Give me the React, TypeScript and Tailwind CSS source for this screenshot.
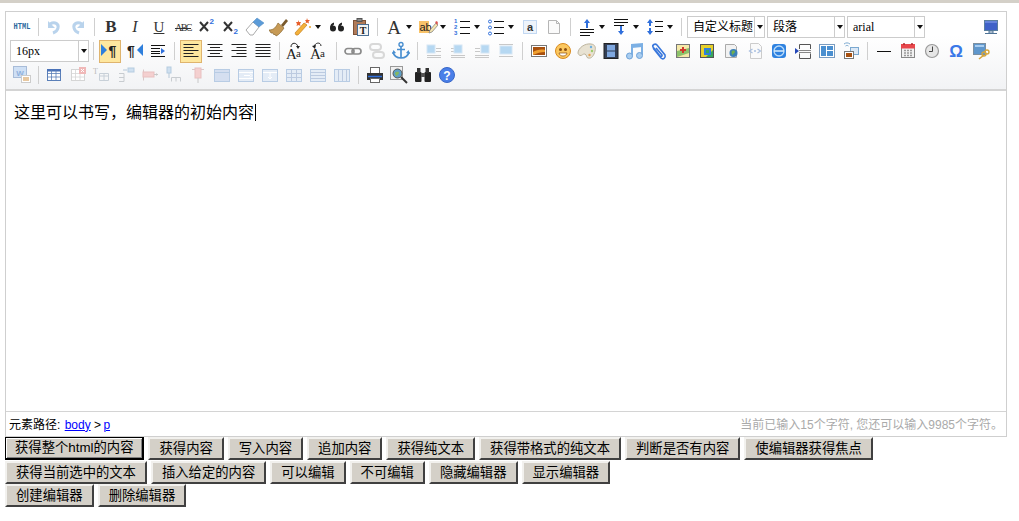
import type { ReactNode } from "react";

const SERIF = { fontFamily: '"Liberation Serif", serif' };

function S({ children }: { children: ReactNode }) {
  return (
    <svg width="20" height="20" viewBox="0 0 20 20" fill="none">
      {children}
    </svg>
  );
}

function Cell({ children, active }: { children?: ReactNode; active?: boolean }) {
  return (
    <div className="flex h-6 w-6 shrink-0 items-center justify-center">
      {active ? (
        <div className="flex h-[23px] w-[22px] items-center justify-center border border-[#dfb46e] bg-[#fee79f]">
          {children}
        </div>
      ) : (
        children
      )}
    </div>
  );
}

function Caret() {
  return (
    <svg width="6" height="4" viewBox="0 0 6 4">
      <path d="M0 0h6L3 4z" fill="#111" />
    </svg>
  );
}

function Split({ children }: { children: ReactNode }) {
  return (
    <div className="flex h-6 w-[34px] shrink-0 items-center">
      <div className="flex h-6 w-6 items-center justify-center">{children}</div>
      <Caret />
    </div>
  );
}

function Sep({ narrow }: { narrow?: boolean }) {
  return (
    <div className={`flex h-6 shrink-0 items-center justify-center ${narrow ? "w-2" : "w-[9px]"}`}>
      <div className="h-[18px] w-px bg-[#cfcfcf]" />
    </div>
  );
}

function Select({ label, serif, wide }: { label: string; serif?: boolean; wide?: boolean }) {
  return (
    <div className={`flex h-[22px] shrink-0 items-stretch border border-[#cccccc] bg-white text-xs text-black ${wide ? "w-[79px]" : "w-[78px]"}`}>
      <div className="flex-1 truncate pl-[5px] leading-[20px]" style={serif ? SERIF : undefined}>
        {label}
      </div>
      <div className="flex w-[10px] items-center justify-center border-l border-[#cccccc]">
        <Caret />
      </div>
    </div>
  );
}

const Lines = ({ x = 4, w = 12, ys, c = "#222" }: { x?: number; w?: number; ys: number[]; c?: string }) => (
  <>
    {ys.map((y) => (
      <path key={y} d={`M${x} ${y + 0.5}h${w}`} stroke={c} />
    ))}
  </>
);

/* row 1 */
const Undo = ({ flip }: { flip?: boolean }) => (
  <S>
    <g transform={flip ? "matrix(-1 0 0 1 20 0)" : undefined}>
      <path d="M6 7c5-3 9 0 8 4-.5 2.500-2 4-5 5" stroke="#b9d3ec" strokeWidth="3" />
      <path d="M4 4v7h7z" fill="#b9d3ec" />
    </g>
  </S>
);
const Sup = ({ down }: { down?: boolean }) => (
  <S>
    <path d="M3 5l8 9M11 5l-8 9" stroke="#333" strokeWidth="2" />
    <text x="12.500" y={down ? 17 : 7} fontSize="8" fontWeight="700" fill="#2f6fdc" fontFamily="Liberation Sans">
      2
    </text>
  </S>
);
const Eraser = () => (
  <S>
    <path d="M1 13l7-8 6 5-6 8H5z" fill="#fff" stroke="#aaa" />
    <path d="M8 5l4-4 7 5-5 4z" fill="#5b9bd8" stroke="#4a86c0" strokeWidth=".5" />
  </S>
);
const Brush = () => (
  <S>
    <path d="M12 8l5-6 2 2-5 6z" fill="#7a5a2c" />
    <path d="M0 13c5 0 7-3 9-7l6 5c-2 3-5 7-8 8l-1-2-1 1-1-2-2 0z" fill="#c79a55" stroke="#8a6830" strokeWidth=".7" />
  </S>
);
const Wand = () => (
  <S>
    <path d="M3 18l-1-2 9-10 3 2-9 10z" fill="#f3b13b" stroke="#c47f1c" strokeWidth=".7" />
    <path d="M5 3l1 2 2 0-1 2 .5 2-2-1-2 1 .5-2-1-2h2zM14 1l.7 2H17l-1.500 1.500.5 2-2-1-1.500 1 .5-2L12 3h1.500z" fill="#e8602c" />
    <circle cx="17" cy="10" r="1" fill="#e8a52c" />
  </S>
);
const Quote = () => (
  <S>
    <circle cx="6" cy="11.500" r="3" fill="#222" />
    <path d="M3 11c0-3 1.500-5 4-5.500v2C6 8 5.500 9 5.500 10z" fill="#222" />
    <circle cx="14" cy="11.500" r="3" fill="#222" />
    <path d="M11 11c0-3 1.500-5 4-5.500v2c-1 .5-1.500 1.500-1.500 2.500z" fill="#222" />
  </S>
);
const Paste = () => (
  <S>
    <rect x="2.500" y="3.500" width="12" height="14" fill="#b07a58" stroke="#7d5238" />
    <rect x="6" y="1.500" width="5" height="3" fill="#888" stroke="#555" />
    <rect x="6.500" y="7.500" width="11" height="11" fill="#f4f4f4" stroke="#4a6f95" />
    <text x="12" y="16.500" textAnchor="middle" fontSize="10" fontWeight="700" fill="#222" fontFamily="Liberation Serif">
      T
    </text>
  </S>
);
const Highlight = () => (
  <S>
    <rect x="1" y="4" width="10" height="12" fill="#f8c36a" />
    <text x="1.500" y="14" fontSize="11" fill="#222" fontFamily="Liberation Sans">
      ab
    </text>
    <path d="M11 16l1-3 6-7 2 2-6 7z" fill="#f6e6b0" stroke="#777" strokeWidth=".7" />
    <path d="M17 5l2-1 1 2-1 2z" fill="#d9534f" />
  </S>
);
const ListO = () => (
  <S>
    <text x="2" y="6" fontSize="6" fontWeight="700" fill="#2f6fdc" fontFamily="Liberation Sans">1</text>
    <text x="2" y="12" fontSize="6" fontWeight="700" fill="#2f6fdc" fontFamily="Liberation Sans">2</text>
    <text x="2" y="18" fontSize="6" fontWeight="700" fill="#2f6fdc" fontFamily="Liberation Sans">3</text>
    <Lines x={8} w={10} ys={[4, 10, 16]} c="#111" />
  </S>
);
const ListU = () => (
  <S>
    {[4.500, 10.500, 16.500].map((y) => (
      <circle key={y} cx="4" cy={y} r="1.500" stroke="#2f6fdc" />
    ))}
    <Lines x={8} w={10} ys={[4, 10, 16]} c="#111" />
  </S>
);
const Boxed = () => (
  <S>
    <rect x="3.500" y="3.500" width="13" height="13" fill="#eef4fb" stroke="#8fb6e6" strokeDasharray="1 1" />
    <text x="10" y="14" textAnchor="middle" fontSize="11" fontWeight="700" fill="#333" fontFamily="Liberation Sans">
      a
    </text>
  </S>
);
const Page = () => (
  <S>
    <path d="M4.500 3.500h8l3 3v10h-11z" fill="#fafafa" stroke="#b5b5b5" />
    <path d="M12.500 3.500v3h3" stroke="#b5b5b5" />
  </S>
);
const SpaceTop = () => (
  <S>
    <path d="M10 2l3 4h-2v5H9V6H7z" fill="#2f6fdc" />
    <Lines x={3} w={14} ys={[12, 15]} c="#111" />
    <Lines x={3} w={10} ys={[18]} c="#111" />
  </S>
);
const SpaceBottom = () => (
  <S>
    <Lines x={3} w={14} ys={[2, 5]} c="#111" />
    <Lines x={3} w={10} ys={[8]} c="#111" />
    <path d="M10 18l3-4h-2V9H9v5H7z" fill="#2f6fdc" />
  </S>
);
const LineHeight = () => (
  <S>
    <path d="M5 2l3 4H6v3H4V6H2zM5 18l3-4H6v-3H4v3H2z" fill="#2f6fdc" />
    <Lines x={10} w={8} ys={[4, 9, 14]} c="#111" />
  </S>
);
const Monitor = () => (
  <S>
    <rect x="3.500" y="3.500" width="13" height="10" fill="#3f62c8" stroke="#5a7f9e" />
    <path d="M4 5h12" stroke="#8ea6ee" />
    <path d="M8 14h4v2H8zM4 16.500h12" stroke="#4f7396" />
  </S>
);

/* row 2 */
const Dir = ({ rtl }: { rtl?: boolean }) => (
  <S>
    <path d={rtl ? "M19 3v12l-6-6z" : "M1 3v12l6-6z"} fill="#2f7fdc" />
    <text x={rtl ? 7 : 12.500} y="15" textAnchor="middle" fontSize="14" fontWeight="700" fill="#222" fontFamily="Liberation Sans">
      ¶
    </text>
  </S>
);
const Indent = () => (
  <S>
    <Lines x={3} w={14} ys={[4, 15]} c="#111" />
    <Lines x={3} w={9} ys={[7, 10, 12]} c="#111" />
    <path d="M13 7l4 3-4 3z" fill="#2f6fdc" />
  </S>
);
const Align = ({ kind }: { kind: "l" | "c" | "r" | "j" }) => {
  const ys = [3, 6, 9, 12, 15];
  return (
    <S>
      {ys.map((y, i) => {
        const long = i % 2 === 0 || kind === "j";
        const w = long ? 15 : 10;
        const x = kind === "c" ? 10 - w / 2 : kind === "r" ? 17.500 - w : 2.500;
        return <path key={y} d={`M${x} ${y + 0.5}h${w}`} stroke="#222" />;
      })}
    </S>
  );
};
const Case = ({ up }: { up?: boolean }) => (
  <S>
    <text x="0" y="18" fontSize="15" fill="#222" fontFamily="Liberation Serif">A</text>
    <text x="10" y="16" fontSize="11" fill="#222" fontFamily="Liberation Serif">a</text>
    <path d={up ? "M5 6c0-5 6-5 7 0" : "M4 6c1-5 7-5 7-1"} stroke="#222" />
    <path d={up ? "M10 5h4l-2 3z" : "M2 5l4-1-1 4z"} fill="#222" />
  </S>
);
const Link = ({ off }: { off?: boolean }) => (
  <S>
    {off ? (
      <>
        <rect x="3" y="3" width="11" height="6" rx="3" stroke="#d8d8d8" strokeWidth="2" />
        <rect x="6" y="11" width="11" height="6" rx="3" stroke="#d8d8d8" strokeWidth="2" />
      </>
    ) : (
      <>
        <rect x="2" y="7.500" width="9" height="5.500" rx="2.700" stroke="#8a8a8a" strokeWidth="1.700" />
        <rect x="9" y="7.500" width="9" height="5.500" rx="2.700" stroke="#8a8a8a" strokeWidth="1.700" />
      </>
    )}
  </S>
);
const Anchor = () => (
  <S>
    <circle cx="10" cy="3.500" r="2" stroke="#4a8fd0" strokeWidth="1.400" />
    <path d="M10 5.500V17M6 8.500h8M2 11c1 4 4 6 8 6s7-2 8-6" stroke="#4a8fd0" strokeWidth="1.700" />
    <path d="M1 13l1.500-4L5 12zM19 13l-1.500-4L15 12z" fill="#4a8fd0" />
  </S>
);
const ImgAlign = ({ kind }: { kind: "l" | "r" | "c" | "n" }) => (
  <S>
    {kind === "n" ? (
      <>
        <Lines x={3} w={14} ys={[3, 15]} c="#c8c8c8" />
        <rect x="4" y="5" width="12" height="8" fill="#b6d8f2" stroke="#d5e6f4" />
      </>
    ) : (
      <>
        <Lines x={3} w={14} ys={[14, 16]} c="#c8c8c8" />
        <Lines x={kind === "l" ? 12 : 3} w={5} ys={[7, 10]} c="#c8c8c8" />
        <rect x={kind === "l" ? 3 : kind === "r" ? 9 : 6} y="4" width="8" height="8" fill="#b6d8f2" stroke="#d5e6f4" />
      </>
    )}
  </S>
);
const Picture = () => (
  <S>
    <rect x="2.500" y="4.500" width="15" height="11" fill="#fff" stroke="#777" />
    <rect x="4" y="6" width="12" height="8" fill="#a8500f" />
    <path d="M4 11c3-2 8-3 12-2v2c-4 0-8 1-12 3z" fill="#f0a030" />
  </S>
);
const Smile = () => (
  <S>
    <circle cx="10" cy="10" r="7.500" fill="#fbc75f" stroke="#d98a1e" />
    <circle cx="7.500" cy="8.500" r="1.500" fill="#8a4d10" />
    <circle cx="12.500" cy="8.500" r="1.500" fill="#8a4d10" />
    <path d="M6 12h8c-.5 2-2 3-4 3s-3.500-1-4-3z" fill="#fff" stroke="#8a4d10" strokeWidth=".7" />
  </S>
);
const Palette = () => (
  <S>
    <path d="M1 12C1 7 8 2 14 3c4 .5 5 3 4 7s-3 8-7 7c-2-.5-1-3-3-4-2-.5-3 2-5 1.500C2 14 1 13 1 12z" fill="#e8e2d2" stroke="#bdb59f" />
    <circle cx="14" cy="6" r="1.200" fill="#6cb0e0" />
    <circle cx="15" cy="10" r="1.200" fill="#9ccc6a" />
    <circle cx="12.500" cy="14" r="1.200" fill="#e8a050" />
  </S>
);
const Film = () => (
  <S>
    <rect x="3" y="2.500" width="14" height="15" fill="#333f55" stroke="#222" />
    <rect x="6" y="4" width="8" height="5.500" fill="#7fa8e0" />
    <rect x="6" y="10.500" width="8" height="5.500" fill="#7fa8e0" />
  </S>
);
const Music = () => (
  <S>
    <path d="M7 14V4l10-1v11" stroke="#7cb0e4" strokeWidth="2" />
    <path d="M7 4l10-1v3L7 7z" fill="#7cb0e4" />
    <circle cx="4.500" cy="15" r="3" fill="#a8cdf0" stroke="#6ea2d8" />
    <circle cx="14.500" cy="14.500" r="3" fill="#a8cdf0" stroke="#6ea2d8" />
  </S>
);
const Clip = () => (
  <S>
    <path d="M4 7l8 10c2 2 5 0 4-3L8 4C6 2 3 4 4 6l7 9c1 1 2.500 0 2-1L7 7" stroke="#3a78dc" strokeWidth="1.600" />
  </S>
);
const MapIcon = () => (
  <S>
    <rect x="3.500" y="3.500" width="13" height="13" fill="#f5e9a8" stroke="#777" />
    <path d="M4 10l12-3v5l-12 4z" fill="#8cc26a" />
    <path d="M9 6h2v2h2v2h-2v2H9v-2H7V8h2z" fill="#d0382c" />
  </S>
);
const GMap = () => (
  <S>
    <rect x="3.500" y="3.500" width="13" height="13" fill="#38a85c" stroke="#555" />
    <path d="M4 4h12v5L9 16H4z" fill="#e6d02c" />
    <path d="M7 7h7v7H7z" fill="#2f7fdc" />
    <path d="M9 9h3v3H9z" fill="#38a85c" />
  </S>
);
const Globe = () => (
  <S>
    <path d="M4.500 3.500h9l2 2v11h-11z" fill="#f2f2f2" stroke="#aaa" />
    <circle cx="12.500" cy="12" r="4" fill="#3a7fb8" />
    <path d="M11 10c2-1 3 0 3 1s-2 1-2 3c-1 0-2-3-1-4z" fill="#6fb04c" />
  </S>
);
const CodePage = () => (
  <S>
    <path d="M5.500 2.500h8l3 3v12h-11z" fill="#fafafa" stroke="#ccc" />
    <path d="M7.500 8l-3 2 3 2M12.500 8l3 2-3 2" stroke="#a9bfe0" strokeWidth="1.200" />
    <circle cx="10" cy="10" r="1" fill="#a9bfe0" />
  </S>
);
const Ring = () => (
  <S>
    <rect x="3" y="3" width="14" height="14" rx="3" fill="#2f82e0" />
    <circle cx="10" cy="10" r="5" stroke="#bcdcf8" strokeWidth="1.300" />
    <path d="M5 10h10" stroke="#d8ecfc" strokeWidth="1.500" />
  </S>
);
const PageBreak = () => (
  <S>
    <path d="M6.500 8V3.500h11V8M6.500 12.500v5h11v-5" stroke="#555" />
    <Lines x={6} w={12} ys={[9, 11]} c="#888" />
    <path d="M2 7l4 3-4 3z" fill="#2346b8" />
  </S>
);
const Template = () => (
  <S>
    <rect x="2.500" y="3.500" width="15" height="13" fill="#fff" stroke="#7a9cc0" />
    <rect x="4" y="5" width="5" height="10" fill="#4a8fd0" />
    <rect x="10" y="5" width="6" height="4" fill="#4a8fd0" />
    <rect x="10" y="10" width="6" height="5" fill="#4a8fd0" />
  </S>
);
const Wireless = () => (
  <S>
    <path d="M3 3c2-1.500 4-1.500 6 0M4.500 5c1-.7 2-.7 3 0" stroke="#7aa8d0" />
    <rect x="9.500" y="6.500" width="8" height="7" fill="#dbe8f6" stroke="#7aa8d0" />
    <rect x="3.500" y="10.500" width="9" height="7" fill="#fff" stroke="#777" />
    <rect x="5" y="12" width="6" height="4" fill="#a8500f" />
  </S>
);
const Calendar = () => (
  <S>
    <rect x="3.500" y="3.500" width="13" height="13" fill="#f2f2f2" stroke="#888" />
    <rect x="3" y="3" width="14" height="4.500" fill="#e8474c" />
    <path d="M6 2v2M14 2v2" stroke="#b02a2e" strokeWidth="1.500" />
    <path d="M6 9.500h8M6 12h8M6 14.500h8" stroke="#9a9a9a" strokeWidth="1.300" strokeDasharray="2 1" />
  </S>
);
const Clock = () => (
  <S>
    <circle cx="10" cy="10" r="6.500" fill="#e6e6e6" stroke="#9a9a9a" strokeWidth="1.200" />
    <path d="M10.500 5.500v5H7" stroke="#444" />
  </S>
);
const Snap = () => (
  <S>
    <rect x="3.500" y="2.500" width="12" height="11" fill="#5f97cc" stroke="#7c8fa0" />
    <path d="M5 4h9v2H5z" fill="#a8cdf0" />
    <circle cx="14" cy="13" r="2" stroke="#d6a63c" strokeWidth="1.400" />
    <circle cx="17" cy="11" r="2" stroke="#d6a63c" strokeWidth="1.400" />
    <path d="M9 18l5-4" stroke="#d6a63c" strokeWidth="1.600" />
  </S>
);

/* row 3 */
const Word = () => (
  <S>
    <rect x="1.500" y="1.500" width="13" height="11" fill="#cfe0f5" stroke="#a8bcd8" />
    <text x="8" y="10.500" textAnchor="middle" fontSize="8" fontWeight="700" fill="#8fb0dc" fontFamily="Liberation Sans">
      W
    </text>
    <rect x="9.500" y="10.500" width="9" height="7" fill="#fff" stroke="#ccc" />
    <rect x="11" y="12" width="6" height="4" fill="#e8c8a0" />
  </S>
);
const Grid = ({ c, bg, head }: { c: string; bg: string; head?: string }) => (
  <>
    <rect x="3.500" y="4.500" width="13" height="11" fill={bg} stroke={c} />
    {head && <rect x="3" y="4" width="14" height="2.500" fill={head} />}
    <path d="M7.500 5v10M12 5v10M4 8.500h12M4 12h12" stroke={c} strokeWidth=".8" />
  </>
);
const TableNew = () => (
  <S>
    <Grid c="#5a7fb8" bg="#fff" head="#4a72b8" />
  </S>
);
const TableDel = () => (
  <S>
    <Grid c="#d5d5d5" bg="#fff" />
    <rect x="11" y="2" width="7" height="7" fill="#f0b8b8" />
    <path d="M13 4l3 3M16 4l-3 3" stroke="#fff" />
  </S>
);
const TableT = () => (
  <S>
    <text x="1" y="9" fontSize="8" fill="#bbb" fontFamily="Liberation Serif">T</text>
    <path d="M7.500 8.500h9v7h-9zM7.500 11h9M12 9v6" stroke="#c8d0d8" />
  </S>
);
const InsertCol = () => (
  <S>
    <path d="M3 8.500h5v8H3M3 12.500h5" stroke="#c8ccd0" />
    <rect x="12" y="3" width="6" height="4" fill="#cfe0f0" stroke="#b5cce0" />
    <path d="M11 5H7" stroke="#b5c8d8" />
  </S>
);
const DelCol = () => (
  <S>
    <path d="M3.500 4.500v11" stroke="#d8c8c8" />
    <rect x="3" y="7" width="11" height="5" fill="#f4d0d0" stroke="#e8c0c0" />
    <path d="M14 9.500h4" stroke="#c8c8c8" />
    <path d="M18 9.500l-2-1.500v3z" fill="#c8c8c8" />
  </S>
);
const InsertRow = () => (
  <S>
    <rect x="3" y="2" width="4" height="6" fill="#cfe0f0" stroke="#b5cce0" />
    <path d="M5 8v5" stroke="#b5c8d8" />
    <path d="M7.500 16.500v-4h9v4M12 12.500v4" stroke="#c8ccd0" />
  </S>
);
const DelRow = () => (
  <S>
    <path d="M4 4.500h12" stroke="#d8c8c8" />
    <rect x="7" y="3" width="6" height="10" fill="#f4d0d0" stroke="#e8c0c0" />
    <path d="M10 13v5" stroke="#c8c8c8" />
  </S>
);
const Cells = ({ kind }: { kind: "plain" | "right" | "down" | "grid" | "rows" | "cols" }) => (
  <S>
    <rect x="2.500" y="4.500" width="15" height="12" fill={kind === "plain" ? "#d5dff0" : "#e4ecf6"} stroke="#b8cce4" />
    {kind === "plain" && <path d="M3 7.500h14" stroke="#b8cce4" />}
    {kind === "grid" && <path d="M7.500 5v11M12.500 5v11M3 8.500h14M3 12.500h14" stroke="#bccae0" />}
    {kind === "rows" && <path d="M3 7.500h14M3 10.500h14M3 13.500h14" stroke="#bccae0" />}
    {kind === "cols" && <path d="M6.500 5v11M10.500 5v11M14.500 5v11" stroke="#bccae0" />}
    {kind === "right" && <path d="M3 7.500h14M3 13.500h14M8 10.500h6M14 8.500l2 2-2 2" stroke="#fff" />}
    {kind === "down" && <path d="M3 7.500h14M10 8v6M8 12l2 2 2-2" stroke="#fff" />}
  </S>
);
const Printer = () => (
  <S>
    <rect x="5.500" y="2.500" width="9" height="6" fill="#fff" stroke="#666" />
    <rect x="2" y="8" width="16" height="7" fill="#333" />
    <path d="M3 11.500h14" stroke="#2f6fdc" strokeWidth="1.500" />
    <rect x="5.500" y="13.500" width="9" height="4" fill="#fff" stroke="#666" />
  </S>
);
const Preview = () => (
  <S>
    <rect x="1.500" y="1.500" width="12" height="13" fill="#f0f0f0" stroke="#999" />
    <circle cx="8.500" cy="8.500" r="4.500" fill="#5ea0c8" stroke="#555" />
    <path d="M6 8c2-2 4-1 4 0s-2 2-2 3c-1 0-2-2-2-3z" fill="#86b860" />
    <path d="M12 12l6 6" stroke="#333" strokeWidth="2" />
  </S>
);
const Binoculars = () => (
  <S>
    <rect x="2" y="7" width="6.500" height="10" rx="1" fill="#222" />
    <rect x="11.500" y="7" width="6.500" height="10" rx="1" fill="#222" />
    <rect x="4" y="3" width="3.500" height="5" fill="#333" />
    <rect x="12.500" y="3" width="3.500" height="5" fill="#333" />
    <rect x="8" y="8" width="4" height="4" fill="#555" />
  </S>
);
const Help = () => (
  <S>
    <circle cx="10" cy="10" r="7.500" fill="#4a7fe8" stroke="#3a68c8" />
    <text x="10" y="14.500" textAnchor="middle" fontSize="12" fontWeight="700" fill="#fff" fontFamily="Liberation Sans">
      ?
    </text>
  </S>
);

const buttonRows = [
  ["获得整个html的内容", "获得内容", "写入内容", "追加内容", "获得纯文本", "获得带格式的纯文本", "判断是否有内容", "使编辑器获得焦点"],
  ["获得当前选中的文本", "插入给定的内容", "可以编辑", "不可编辑", "隐藏编辑器", "显示编辑器"],
  ["创建编辑器", "删除编辑器"],
];

export default function App() {
  return (
    <div className="h-[521px] w-[1019px] overflow-hidden bg-white font-['Liberation_Sans','Noto_Sans_CJK_SC',sans-serif] text-black">
      <div className="h-[3px] bg-[#d4d0c8]" />

      <div className="mt-2 ml-[5px] flex h-[426px] w-[1002px] flex-col border border-[#cfcfcf]">
        {/* toolbar */}
        <div className="h-[79px] border-b-2 border-[#d4d4d4] bg-gradient-to-b from-white from-30% to-[#f2f3f5] py-[3px] pl-1">
          <div className="flex h-6 items-center">
            <Cell>
              <span className="scale-y-125 font-['Liberation_Mono',monospace] text-[7px] font-bold text-[#2a6a9e]">HTML</span>
            </Cell>
            <Sep narrow />
            <Cell><Undo /></Cell>
            <Cell><Undo flip /></Cell>
            <Sep />
            <Cell><span className="text-[17px] font-bold text-[#333]" style={SERIF}>B</span></Cell>
            <Cell><span className="text-[16px] text-[#333] italic" style={SERIF}>I</span></Cell>
            <Cell><span className="text-[15px] text-[#333] underline" style={SERIF}>U</span></Cell>
            <Cell><span className="text-[10px] tracking-[-1.5px] text-[#333] line-through" style={SERIF}>ABC</span></Cell>
            <Cell><Sup /></Cell>
            <Cell><Sup down /></Cell>
            <Cell><Eraser /></Cell>
            <Cell><Brush /></Cell>
            <Split><Wand /></Split>
            <Cell><Quote /></Cell>
            <Cell><Paste /></Cell>
            <Sep />
            <Split><span className="text-[19px] leading-none text-[#333]" style={SERIF}>A</span></Split>
            <Split><Highlight /></Split>
            <Split><ListO /></Split>
            <Split><ListU /></Split>
            <Cell><Boxed /></Cell>
            <Cell><Page /></Cell>
            <Sep />
            <Split><SpaceTop /></Split>
            <Split><SpaceBottom /></Split>
            <Split><LineHeight /></Split>
            <Sep />
            <div className="ml-px flex gap-[2px]">
              <Select label="自定义标题" />
              <Select label="段落" />
              <Select label="arial" serif />
            </div>
            <div className="ml-auto mr-[3px]">
              <Cell><Monitor /></Cell>
            </div>
          </div>

          <div className="flex h-6 items-center">
            <Select label="16px" serif wide />
            <Sep />
            <Cell active><Dir /></Cell>
            <Cell><Dir rtl /></Cell>
            <Cell><Indent /></Cell>
            <Sep />
            <Cell active><Align kind="l" /></Cell>
            <Cell><Align kind="c" /></Cell>
            <Cell><Align kind="r" /></Cell>
            <Cell><Align kind="j" /></Cell>
            <Sep />
            <Cell><Case up /></Cell>
            <Cell><Case /></Cell>
            <Sep />
            <Cell><Link /></Cell>
            <Cell><Link off /></Cell>
            <Cell><Anchor /></Cell>
            <Sep />
            <Cell><ImgAlign kind="l" /></Cell>
            <Cell><ImgAlign kind="c" /></Cell>
            <Cell><ImgAlign kind="r" /></Cell>
            <Cell><ImgAlign kind="n" /></Cell>
            <Sep />
            <Cell><Picture /></Cell>
            <Cell><Smile /></Cell>
            <Cell><Palette /></Cell>
            <Cell><Film /></Cell>
            <Cell><Music /></Cell>
            <Cell><Clip /></Cell>
            <Cell><MapIcon /></Cell>
            <Cell><GMap /></Cell>
            <Cell><Globe /></Cell>
            <Cell><CodePage /></Cell>
            <Cell><Ring /></Cell>
            <Cell><PageBreak /></Cell>
            <Cell><Template /></Cell>
            <Cell><Wireless /></Cell>
            <Sep />
            <Cell><div className="h-px w-[14px] bg-[#111]" /></Cell>
            <Cell><Calendar /></Cell>
            <Cell><Clock /></Cell>
            <Cell><span className="text-[17px] leading-none font-bold text-[#3a78e8]">Ω</span></Cell>
            <Cell><Snap /></Cell>
          </div>

          <div className="flex h-6 items-center">
            <Cell><Word /></Cell>
            <Sep narrow />
            <Cell><TableNew /></Cell>
            <Cell><TableDel /></Cell>
            <Cell><TableT /></Cell>
            <Cell><InsertCol /></Cell>
            <Cell><DelCol /></Cell>
            <Cell><InsertRow /></Cell>
            <Cell><DelRow /></Cell>
            <Cell><Cells kind="plain" /></Cell>
            <Cell><Cells kind="right" /></Cell>
            <Cell><Cells kind="down" /></Cell>
            <Cell><Cells kind="grid" /></Cell>
            <Cell><Cells kind="rows" /></Cell>
            <Cell><Cells kind="cols" /></Cell>
            <Sep />
            <Cell><Printer /></Cell>
            <Cell><Preview /></Cell>
            <Cell><Binoculars /></Cell>
            <Cell><Help /></Cell>
          </div>
        </div>

        {/* edit area */}
        <div className="flex-1 pt-3 pl-2 text-base leading-[20px]">
          这里可以书写，编辑器的初始内容<span className="ml-px inline-block h-[17px] w-px bg-black align-[-3px]" />
        </div>

        {/* status bar */}
        <div className="flex h-[25px] items-center justify-between border-t border-[#d4d4d4] px-[3px] pt-px text-xs">
          <div>
            元素路径: <span className="ml-px text-[#0000ff] underline">body</span> &gt; <span className="-ml-px text-[#0000ff] underline">p</span>
          </div>
          <div className="text-[#aaaaaa]">当前已输入15个字符, 您还可以输入9985个字符。</div>
        </div>
      </div>

      {/* demo buttons */}
      <div className="ml-[5px] flex flex-col">
        {buttonRows.map((row, r) => (
          <div key={r} className={`flex gap-1 ${r === 1 ? "mt-px" : ""}`}>
            {row.map((label, i) => (
              <button
                key={label}
                className={
                  r === 0 && i === 0
                    ? "h-[23px] whitespace-nowrap border border-b-2 border-r-2 border-black bg-[#d4d0c8] px-[9px] text-[13.33px] leading-none shadow-[inset_1px_1px_0_#fff,inset_-1px_-1px_0_#808080]"
                    : "h-[23px] whitespace-nowrap border-2 border-t-[#f2f1ee] border-r-[#404040] border-b-[#404040] border-l-[#f2f1ee] bg-[#d4d0c8] px-[9px] text-[13.33px] leading-none"
                }
              >
                {label}
              </button>
            ))}
          </div>
        ))}
      </div>
    </div>
  );
}
